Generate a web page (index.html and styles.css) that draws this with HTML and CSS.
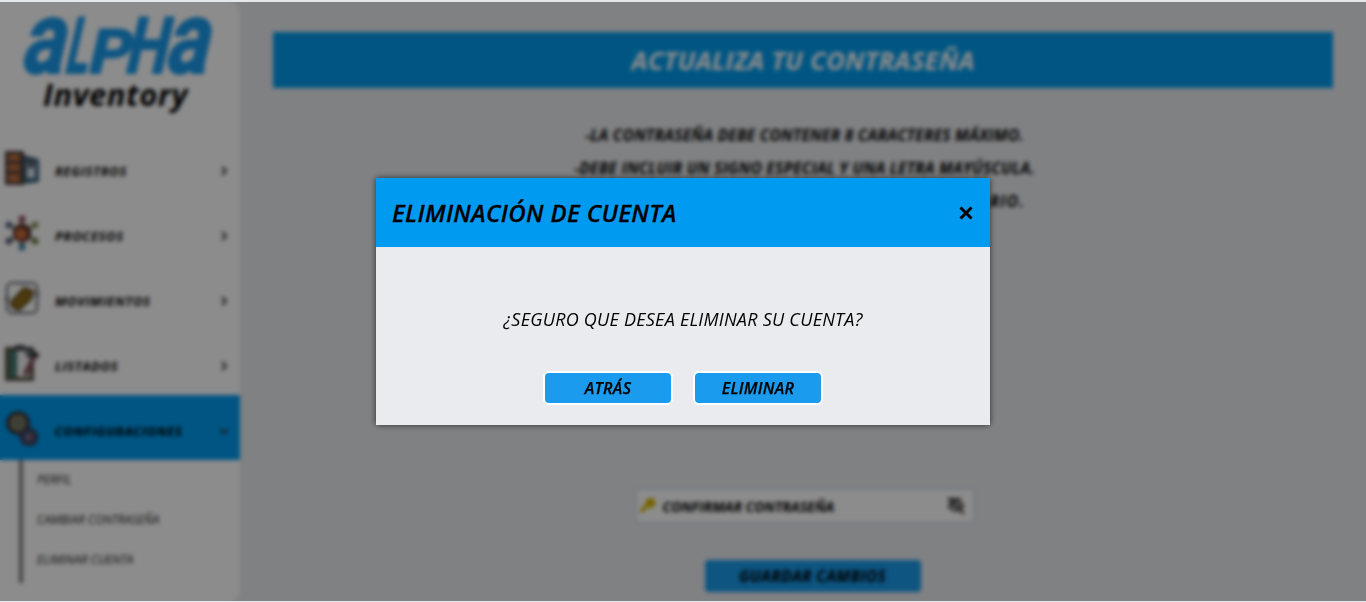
FILE: index.html
```html
<!DOCTYPE html>
<html lang="es">
<head>
<meta charset="utf-8">
<title>Alpha Inventory</title>
<link rel="stylesheet" href="styles.css">
</head>
<body>
<div class="app">
  <aside class="sidebar">
    <div class="brand">
      <svg class="wordmark" width="200" height="66" viewBox="0 0 200 66">
        <g transform="translate(14.5 0) skewX(-13)">
          <text x="-3" y="63" font-size="102" textLength="43" lengthAdjust="spacingAndGlyphs">a</text>
          <text x="41" y="63" font-size="78" textLength="23" lengthAdjust="spacingAndGlyphs">L</text>
          <text x="64" y="63" font-size="61" textLength="42" lengthAdjust="spacingAndGlyphs">P</text>
          <text x="101" y="63" font-size="78" textLength="42" lengthAdjust="spacingAndGlyphs">H</text>
          <text x="141" y="63" font-size="102" textLength="43" lengthAdjust="spacingAndGlyphs">a</text>
        </g>
      </svg>
      <span class="brand-sub">Inventory</span>
    </div>
    <nav class="menu">
      <a class="item">
        <svg class="icon" viewBox="0 0 36 36"><rect x="1" y="1" width="19" height="34" fill="#4c3c3c"/><path d="M4 4h12v7H4zM4 14h12v7H4zM4 24h12v8H4z" fill="#b9703f"/><path d="M20 5l15 4v23l-15 2z" fill="#36627c"/><path d="M23 12h8v16h-8z" fill="#dde3ee"/><path d="M24 8h6v10h-6z" fill="#50545c"/></svg>
        <span>REGISTROS</span><svg class="chev" viewBox="0 0 10 12"><path d="M3 2l4 4-4 4"/></svg>
      </a>
      <a class="item">
        <svg class="icon" viewBox="0 0 36 36"><path d="M18 4v28M5 10l26 16M31 10L5 26" stroke="#333" stroke-width="2"/><circle cx="18" cy="18" r="9.500" fill="#54302a"/><circle cx="17" cy="19" r="6" fill="#c86a36"/><circle cx="18" cy="4" r="3.500" fill="#94435c"/><circle cx="5" cy="10" r="3.500" fill="#59657c"/><circle cx="31" cy="10" r="3.500" fill="#8b9550"/><circle cx="5" cy="26" r="3.500" fill="#55576e"/><circle cx="31" cy="26" r="3.500" fill="#698441"/><circle cx="18" cy="32" r="3.500" fill="#367ba0"/></svg>
        <span>PROCESOS</span><svg class="chev" viewBox="0 0 10 12"><path d="M3 2l4 4-4 4"/></svg>
      </a>
      <a class="item">
        <svg class="icon" viewBox="0 0 36 36"><rect x="3" y="3" width="30" height="30" rx="5" fill="#fff" stroke="#555a69" stroke-width="2"/><path d="M1 19h4M31 14h4" stroke="#555" stroke-width="3"/><path d="M7 22L20 8l9 3-2 8-12 11-7-3z" fill="#8c691b" stroke="#59471b" stroke-width="2"/></svg>
        <span>MOVIMIENTOS</span><svg class="chev" viewBox="0 0 10 12"><path d="M3 2l4 4-4 4"/></svg>
      </a>
      <a class="item">
        <svg class="icon" viewBox="0 0 36 36"><rect x="3" y="4" width="25" height="30" fill="#f0f0f0" stroke="#594f42" stroke-width="4"/><path d="M5 6h8v26H5z" fill="#3d7669"/><path d="M10 4q6-6 12 0l9 4-2 6-7-6" fill="none" stroke="#36404f" stroke-width="3"/><path d="M30 12L21 30" stroke="#844d59" stroke-width="5"/><path d="M31 8l3 4" stroke="#222" stroke-width="4"/></svg>
        <span>LISTADOS</span><svg class="chev" viewBox="0 0 10 12"><path d="M3 2l4 4-4 4"/></svg>
      </a>
      <a class="item active">
        <svg class="icon" viewBox="0 0 36 36"><path d="M14 13l11 14" stroke="#31353e" stroke-width="14"/><circle cx="14" cy="13" r="9" fill="#6b7568" stroke="#31353e" stroke-width="6"/><circle cx="14" cy="13" r="7" fill="none" stroke="#a28b55" stroke-width="2"/><circle cx="25" cy="27" r="7" fill="#58709a" stroke="#3a405a" stroke-width="5"/><circle cx="26" cy="27" r="3" fill="#865667"/></svg>
        <span>CONFIGURACIONES</span><svg class="chev" viewBox="0 0 10 12"><path d="M1 4l4 4 4-4"/></svg>
      </a>
      <div class="submenu"><a>PERFIL</a><a>CAMBIAR CONTRASEÑA</a><a>ELIMINAR CUENTA</a></div>
    </nav>
  </aside>
  <main class="content">
    <h1 class="banner">ACTUALIZA TU CONTRASEÑA</h1>
    <div class="rules">
      <p>-LA CONTRASEÑA DEBE CONTENER 8 CARACTERES MÁXIMO.</p>
      <p>-DEBE INCLUIR UN SIGNO ESPECIAL Y UNA LETRA MAYÚSCULA.</p>
      <p>-LA CONTRASEÑA NO DEBE SER IGUAL A SU USUARIO.</p>
    </div>
    <div class="field">
      <svg width="18" height="18" viewBox="0 0 18 18"><circle cx="11.5" cy="6" r="5" fill="#d8b400"/><path d="M9 7L2 15" stroke="#d8b400" stroke-width="4"/></svg>
      <span>CONFIRMAR CONTRASEÑA</span>
      <svg width="20" height="18" viewBox="0 0 20 18"><path d="M1 9q9-13 18 0-9 12-18 0z" fill="#666"/><circle cx="10" cy="9" r="3.5" fill="#ccc"/><path d="M2 2h13M2 1l16 16" stroke="#333" stroke-width="2.2"/></svg>
    </div>
    <button class="save">GUARDAR CAMBIOS</button>
  </main>
</div>
<div class="overlay">
  <section class="modal">
    <header class="modal-head"><h2>ELIMINACIÓN DE CUENTA</h2>
      <svg class="close" viewBox="0 0 14 14"><path d="M1.5 1.5l11 11M12.5 1.5l-11 11"/></svg>
    </header>
    <div class="modal-body">
      <p>¿SEGURO QUE DESEA ELIMINAR SU CUENTA?</p>
      <div class="actions"><button>ATRÁS</button><button>ELIMINAR</button></div>
    </div>
  </section>
</div>
</body>
</html>
```
FILE: styles.css
```css
* { box-sizing: border-box; margin: 0; }
body {
  height: 602px;
  padding: 2px 0 1px;
  overflow: hidden;
  background: #e4e8eb;
  font-family: "Open Sans", "Noto Sans", sans-serif;
  font-style: italic;
  letter-spacing: 0.25px;
  color: #000;
}
.app { display: flex; height: 599px; background: #e9ebee; }
.sidebar { width: 240px; height: 599px; background: #fff; border-radius: 0 12px 12px 0; }
.brand { display: flex; flex-direction: column; height: 133px; padding: 8px 0 0 22px; }
.wordmark { display: block; overflow: visible; fill: #1a9bed; stroke: #1a9bed; stroke-width: 2; stroke-linejoin: round; font-family: Roboto, sans-serif; font-weight: 700; font-style: normal; letter-spacing: 0; }
.brand-sub { padding-left: 21px; margin-top: -2px; font-size: 31px; line-height: 40px; font-weight: 700; letter-spacing: 0.5px; }
.item { display: flex; align-items: center; height: 65px; padding: 0 11px 0 4px; font-size: 13px; font-weight: 700; letter-spacing: 0.65px; }
.item span { flex: 1; padding-left: 15px; padding-top: 6px; }
.icon { width: 36px; height: 36px; }
.chev { width: 10px; height: 12px; margin-top: 6px; fill: none; stroke: #333; stroke-width: 2; }
.active { background: #009cef; }
.submenu { display: flex; flex-direction: column; height: 123px; margin-left: 19px; padding-left: 14px; border-left: 4px solid #7d7d83; letter-spacing: 0; }
.submenu a { height: 40px; font-size: 12px; line-height: 39px; color: #222; }
.content { display: flex; flex: 1; flex-direction: column; align-items: center; padding: 30px 33px 0; }
.banner { width: 100%; height: 56px; line-height: 56px; text-align: center; font-size: 25.5px; font-weight: 700; letter-spacing: 0.35px; color: #fff; background: #009cef; }
.rules { height: 369px; padding-top: 31px; margin-left: 3px; text-align: center; font-size: 15.5px; font-weight: 700; line-height: 33px; white-space: nowrap; }
.rules p:last-child { letter-spacing: 1.3px; }
.field { display: flex; align-items: center; width: 340px; height: 36px; margin-top: 31px; margin-left: 3px; padding: 0 7px 0 2px; border: 2px solid #cfe1ed; border-radius: 4px; background: #fff; font-size: 14px; font-weight: 700; letter-spacing: 0; }
.field span { flex: 1; padding-left: 6px; }
.save { width: 216px; height: 32px; margin-top: 36px; margin-left: 19px; border: 0; border-radius: 4px; background: #1a9bed; font: italic 700 15.5px "Open Sans", sans-serif; letter-spacing: 0.4px; }
.overlay { position: absolute; top: 2px; right: 0; bottom: 1px; left: 0; display: flex; align-items: center; justify-content: center; background: rgba(0, 0, 0, .45); backdrop-filter: blur(2.2px); }
.modal { width: 614px; height: 247px; background: #e9ebee; box-shadow: 0 0 6px rgba(0, 0, 0, .65); }
.modal-head { display: flex; align-items: center; justify-content: space-between; height: 69px; padding: 0 17px 0 16px; background: #009bf1; }
.modal-head h2 { font-size: 24px; font-weight: 600; line-height: 33px; letter-spacing: 0.38px; -webkit-text-stroke: 0.3px #000; }
.close { width: 14px; height: 14px; margin-top: 1px; fill: none; stroke: #000; stroke-width: 3; }
.modal-body { display: flex; flex-direction: column; align-items: center; padding-top: 59px; }
.modal-body p { font-size: 18px; line-height: 26px; }
.actions { display: flex; gap: 20px; margin-top: 39px; }
.actions button { width: 130px; height: 34px; padding: 0; border: 2px solid #fff; border-radius: 6px; background: #1a9bed; font: italic 600 16px "Open Sans", sans-serif; letter-spacing: 0.3px; -webkit-text-stroke: 0.25px #000; color: #000; }
```
